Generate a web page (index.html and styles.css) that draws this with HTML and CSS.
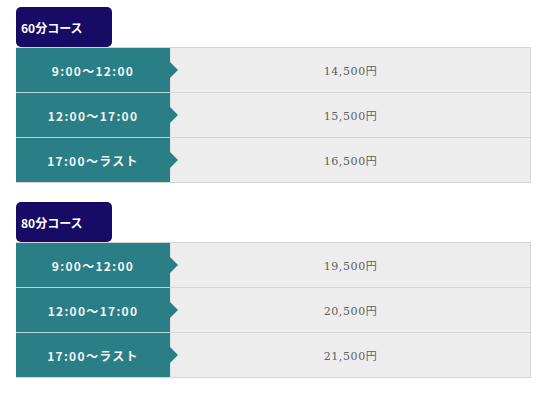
FILE: index.html
```html
<!DOCTYPE html>
<html lang="ja">
<head>
<meta charset="utf-8">
<link rel="stylesheet" href="styles.css">
</head>
<body>
<div class="course">
  <div class="label">60分コース</div>
  <div class="table">
    <div class="row"><div class="time">9:00〜12:00</div><div class="price">14,500円</div></div>
    <div class="row"><div class="time">12:00〜17:00</div><div class="price">15,500円</div></div>
    <div class="row"><div class="time">17:00〜ラスト</div><div class="price">16,500円</div></div>
  </div>
</div>
<div class="course">
  <div class="label">80分コース</div>
  <div class="table">
    <div class="row"><div class="time">9:00〜12:00</div><div class="price">19,500円</div></div>
    <div class="row"><div class="time">12:00〜17:00</div><div class="price">20,500円</div></div>
    <div class="row"><div class="time">17:00〜ラスト</div><div class="price">21,500円</div></div>
  </div>
</div>
</body>
</html>
```
FILE: styles.css
```css
html, body { margin: 0; padding: 0; background: #fff; }
body {
  padding: 7px 0 0 16px;
  font-family: "Noto Sans CJK JP", "Noto Sans", sans-serif;
}
.course { margin-bottom: 19px; }
.label {
  width: 96px;
  height: 40px;
  box-sizing: border-box;
  background: #170b66;
  color: #fff;
  border-radius: 5px;
  font-size: 12px;
  font-weight: bold;
  display: flex;
  align-items: center;
  padding-left: 5px;
}
.table {
  width: 515px;
  border-top: 1px solid #d5d5d5;
}
.row {
  display: flex;
  height: 45px;
}
.time {
  width: 154px;
  box-sizing: border-box;
  background: #2a7f87;
  color: #f4f4f4;
  font-size: 12px;
  font-weight: bold;
  letter-spacing: 1.3px;
  border-bottom: 1px solid #b9d2d5;
  display: flex;
  align-items: center;
  justify-content: center;
  position: relative;
}
.row:last-child .time { border-bottom-color: #d5d5d5; }
.time::after {
  content: "";
  position: absolute;
  right: -8px;
  top: 14px;
  border-left: 8px solid #2a7f87;
  border-top: 8px solid transparent;
  border-bottom: 8px solid transparent;
}
.price {
  flex: 1;
  background: #ededed;
  border-left: 1px solid #e2e2e2;
  border-right: 1px solid #d5d5d5;
  border-bottom: 1px solid #d5d5d5;
  color: #5f5f5f;
  font-family: "DejaVu Serif", "Noto Sans CJK JP", serif;
  font-size: 11px;
  letter-spacing: 0.6px;
  display: flex;
  align-items: center;
  justify-content: center;
}
```
